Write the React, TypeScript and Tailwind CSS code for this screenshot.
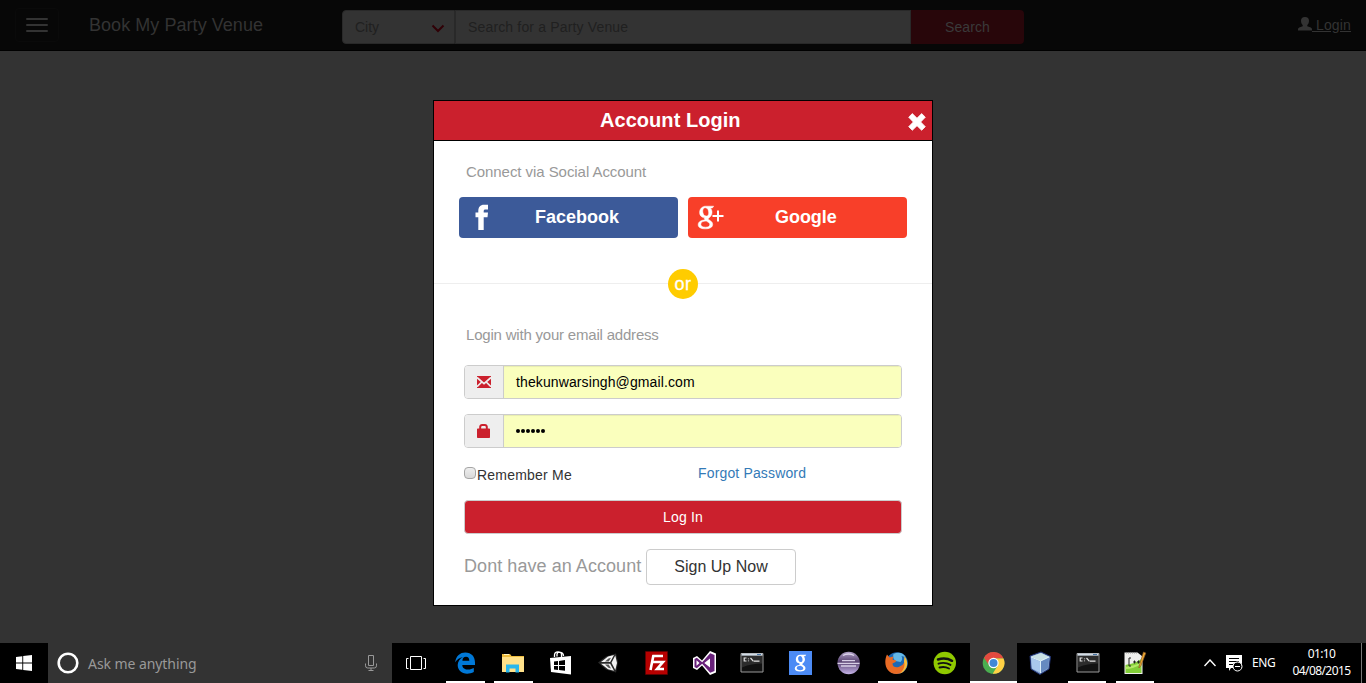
import React from "react";

function Svg({ children, w = 24, h = 24 }: { children: React.ReactNode; w?: number; h?: number }) {
  return (
    <svg width={w} height={h} viewBox={`0 0 ${w} ${h}`} fill="none" className="block shrink-0">
      {children}
    </svg>
  );
}

function Header() {
  return (
    <header className="flex h-[51px] shrink-0 items-start border-b border-black bg-[#070707]">
      <button className="ml-[15px] mt-2 flex h-[34px] w-11 flex-col items-center justify-center gap-1 rounded border border-[#0a0a0a]" aria-label="Menu">
        <span className="h-0.5 w-[22px] rounded-[1px] bg-[#333]" />
        <span className="h-0.5 w-[22px] rounded-[1px] bg-[#333]" />
        <span className="h-0.5 w-[22px] rounded-[1px] bg-[#333]" />
      </button>
      <div className="ml-[30px] mt-[15px] w-[253px] text-[18px] leading-5 tracking-[0.05px] text-[#333]">Book My Party Venue</div>
      <div className="mt-[10px] flex h-[34px] text-sm">
        <div className="flex w-[113px] items-center justify-between rounded-l border border-[#292929] bg-[#333] pl-3 pr-[9px] text-[#202020]">
          <span>City</span>
          <svg width="14" height="10" viewBox="0 0 14 10" fill="none" className="mt-[3px]">
            <path d="M1.500 1.500 7 7l5.500-5.500" stroke="#300006" strokeWidth="2" />
          </svg>
        </div>
        <div className="flex w-[456px] items-center border border-[#292929] bg-[#333] pl-3 tracking-[0.16px] text-[#202020]">Search for a Party Venue</div>
        <button className="w-[113px] rounded-r bg-[#28060a] tracking-[0.1px] text-[#3a3a3a]">Search</button>
      </div>
      <a className="ml-auto mr-[15px] mt-[15px] flex text-sm leading-5 text-[#333]">
        <svg width="14" height="15" viewBox="0 0 14 15" fill="#333" className="mt-px">
          <path d="M7 1C4.200 1 3 2.500 3 4.800c0 1.700.6 3.300 1.700 4.300v1.200L1.200 11.600C.4 12 0 12.500 0 13.200V14.500h14v-1.300c0-.7-.4-1.200-1.200-1.600l-3.500-1.300V9.100c1.100-1 1.700-2.600 1.700-4.300C11 2.500 9.800 1 7 1Z" />
        </svg>
        <span className="whitespace-pre tracking-[0.15px] underline"> Login</span>
      </a>
    </header>
  );
}

function Modal() {
  return (
    <section className="mx-auto mt-[49px] flex h-[506px] w-[500px] flex-col border border-black bg-white">
      <div className="flex h-10 shrink-0 border-b border-black bg-[#cb202d] text-white">
        <h1 className="ml-[166px] w-[141px] whitespace-nowrap text-xl font-bold leading-[38px] tracking-[0.05px]">Account Login</h1>
        <svg width="18" height="18" viewBox="0 0 18 18" fill="white" className="ml-auto mr-[6px] mt-3">
          <path d="M4.300.6 9 5.200 13.700.6 17.300 4.200 12.700 9l4.600 4.700-3.600 3.600L9 12.700l-4.700 4.600L.7 13.700 5.300 9 .7 4.200Z" stroke="white" strokeWidth=".8" strokeLinejoin="round" />
        </svg>
      </div>
      <p className="ml-8 mt-[21px] text-[15px] leading-5 tracking-[-0.06px] text-[#999]">Connect via Social Account</p>
      <div className="ml-[25px] mt-[15px] flex gap-[10px] text-[18px] font-bold text-white">
        <button className="flex h-[41px] w-[219px] items-center rounded bg-[#3c5a99]">
          <svg width="14" height="27" viewBox="0 0 14 27" fill="white" className="ml-4 shrink-0">
            <path d="M3.300 26V13.300H.5V8.500h2.800V7.200C3.300 3.100 5.200.8 9 .8h4v4.800h-2.300c-1.700 0-2 .6-2 1.700v1.200H13l-.5 4.800H8.700V26Z" />
          </svg>
          <span className="ml-[46px]">Facebook</span>
        </button>
        <button className="flex h-[41px] w-[219px] items-center rounded bg-[#f83f29]">
          <svg width="27" height="25" viewBox="0 0 27 25" fill="white" className="ml-[9px] shrink-0">
            <path transform="translate(.4 .4) scale(.95)" stroke="white" strokeWidth=".5" fillRule="evenodd" d="M8.800.8h8.400l-1.500 2h-2c1.100 1.200 1.700 2.800 1.700 4.500 0 3.100-1.700 4.700-3.300 5.900-1 .8-.8 1.300.2 2 2 1.400 3.800 2.300 3.800 4.800 0 3-3.300 4.700-7.700 4.700C3.500 24.700.8 23 .8 20.300c0-3.100 3.200-4.900 7.200-5-.8-.9-1-1.500-.6-2.500-3.100 0-5.100-2.200-5.100-5.300C2.300 3.600 5 .8 8.800.8Zm-.5 1.700C6.700 2.500 5.600 4 5.600 6c0 2.700 1.400 5.200 3.600 5.200 1.800 0 2.700-1.300 2.700-3.300 0-2.900-1.300-5.400-3.600-5.400Zm1 14c-3.300 0-5.700 1.200-5.700 3.300 0 1.900 2 3.100 5 3.100 2.800 0 4.400-1 4.400-2.700 0-1.400-1-2.200-3.700-3.700Z" />
            <path d="M20 5.500h2V10h4.500v2H22v4.500h-2V12h-4.500v-2H20Z" />
          </svg>
          <span className="ml-[51px] tracking-[-0.05px]">Google</span>
        </button>
      </div>
      <div className="mt-[30px] flex h-[31px] items-center">
        <span className="h-px flex-1 bg-[#eee]" />
        <span className="flex size-[30px] items-center justify-center rounded-full bg-[#fc0] pt-px text-[18px] tracking-[0.5px] text-white [-webkit-text-stroke:0.3px_white]">or</span>
        <span className="h-px flex-1 bg-[#eee]" />
      </div>
      <p className="ml-8 mt-[26px] text-[15px] leading-5 tracking-[-0.2px] text-[#999]">Login with your email address</p>
      <div className="ml-[30px] mt-5 flex w-[438px] flex-col text-sm">
        <div className="flex h-[34px] overflow-hidden rounded border border-[#ccc]">
          <div className="flex w-[39px] items-center justify-center border-r border-[#ccc] bg-[#eee]">
            <svg width="14" height="12" viewBox="0 0 14 12">
              <path d="M0 0h14v12H0Z" fill="#cb202d" />
              <path d="M0 1.500 7 7.600 14 1.500M0 10.700 4.800 6M14 10.700 9.200 6" fill="none" stroke="#eee" strokeWidth="1.700" />
            </svg>
          </div>
          <div className="flex flex-1 items-center bg-[#faffbd] pl-3 tracking-[0.11px] text-black shadow-[inset_0_1px_1px_rgba(0,0,0,0.075)]">thekunwarsingh@gmail.com</div>
        </div>
        <div className="mt-[15px] flex h-[34px] overflow-hidden rounded border border-[#ccc]">
          <div className="flex w-[39px] items-center justify-center border-r border-[#ccc] bg-[#eee]">
            <svg width="14" height="14" viewBox="0 0 14 14">
              <path d="M0 5.500c0-.6.400-1 1-1h1.200V2.800C2.200 1.100 3.500 0 5.100 0h2.800c1.600 0 2.900 1.100 2.900 2.800v1.700H12c.6 0 1 .4 1 1V13c0 .6-.4 1-1 1H1c-.6 0-1-.4-1-1Z" fill="#cb202d" />
              <path d="M4.200 4.500V3.200C4.200 2.400 4.700 2 5.400 2h2.200c.7 0 1.200.4 1.200 1.200v1.300Z" fill="#eee" />
            </svg>
          </div>
          <div className="flex flex-1 items-center gap-[1px] bg-[#faffbd] pl-3 shadow-[inset_0_1px_1px_rgba(0,0,0,0.075)]">
            {[0, 1, 2, 3, 4, 5].map((i) => <span key={i} className="size-1 rounded-full bg-black" />)}
          </div>
        </div>
        <div className="mt-[15px] flex h-5 items-start">
          <span className="mt-1 size-3 rounded-sm border border-[#a5a5a5] bg-linear-to-b from-[#eee] to-[#d9d9d9]" />
          <span className="ml-px mt-[2px] w-[221px] leading-5 tracking-[0.22px] text-[#333]">Remember Me</span>
          <a className="leading-5 tracking-[0.15px] text-[#337ab7]">Forgot Password</a>
        </div>
        <button className="mt-[17px] h-[34px] rounded border border-[#ccc] bg-[#cb202d] tracking-[0.15px] text-white">Log In</button>
        <div className="mt-[15px] flex">
          <span className="w-[182px] whitespace-nowrap text-[18px] leading-[34px] tracking-[0.06px] text-[#999]">Dont have an Account</span>
          <button className="h-9 w-[150px] rounded border border-[#ccc] text-base text-[#333]">Sign Up Now</button>
        </div>
      </div>
    </section>
  );
}

function ConsoleIcon() {
  return (
    <Svg>
      <path d="M1 2.500h22V21H1Z" fill="#111" stroke="#9a9a9a" />
      <path d="M1.500 2.500h21v2.200h-21Z" fill="#d2dce6" />
      <path d="M17 3.500h4" stroke="#4774a4" />
      <path d="M2 5h20v7.500c-7 0-13 1-20 4Z" fill="#2c2c2c" />
      <path d="M6.500 7H4.200v3h2.300M8.500 7.500v.8M8.500 9.500v.8M10.500 7l3 3.300M14 10.200h5.500" stroke="#e4e4e4" strokeWidth="1.200" />
    </Svg>
  );
}

const icons: { icon: React.ReactNode; on?: boolean; active?: boolean; late?: boolean }[] = [
  { icon: <Svg><path d="M6.500 5.500h11v13h-11ZM4.500 7.500h-2v10h2M19.500 7.500h2v10h-2" stroke="white" /></Svg> },
  { on: true, icon: <Svg><path d="M3.200 11.200C4 4.800 8.200 1.500 13.300 1.500c6.200 0 9.700 4.300 9.700 10.100v2.300H10.300c.1 3.400 3 4.700 5.900 4.700 2.100 0 4-.6 5.600-1.500V21c-2 1.200-4.400 1.700-6.700 1.700-5.500 0-9.400-3.200-9.400-8.600 0-3.500 2-6.400 5.200-7.900-3.400.5-5.700 2.100-7.700 5Zm7.200-1.500h6.900c0-2.500-1-4-3.300-4s-3.400 1.600-3.600 4Z" fill="#0078d7" /></Svg> },
  { on: true, icon: <Svg><path d="M2 3h8l1.500 2H24v16H2Z" fill="#efbd3e" /><path d="M2 6h22v15H2Z" fill="#ffe18a" /><path d="M4 3.500h5" stroke="#fff3bf" /><path d="M6 21.500v-8h13v8h-3.500v-4h-6v4Z" fill="#28b7ed" /></Svg> },
  { icon: <Svg><path d="m2 7 21-2v18.500L3 21Z" fill="white" /><path d="M6.500 6V4c0-4 7-4 7-.5V6M9 5.500V3c1-3 6.500-2 6.500 2" stroke="white" strokeWidth="1.300" /><path d="m6 10.500 4-.5v4H6Zm5-.6 6-.8V14h-6ZM6 15h4v4l-4-.4Zm5 0h6v4.700l-6-.6Z" fill="#000" /></Svg> },
  { icon: <Svg><path d="m2 11.500 8-6 10-3 2 9-2 10-10-3Z" fill="#292929" /><path d="m5 11 7-5.500 6-1.500-3.800 7ZM15.500 11.700 19.300 4.500 21 12l-1.700 7ZM5 12.700h9.200l3.800 7-6-1.500Z" fill="#f3f3f3" /><path d="m9 10.500 3.500-3 2.500-.8-2.300 3.800ZM9 13.500h3.700l2.300 4-2.500-.7Z" fill="#555" /></Svg> },
  { icon: <Svg><path d="M1.500.500h22v23h-22Z" fill="#b60000" stroke="#650000" strokeDasharray="1 1" /><path d="M9 5h10M9.500 4l-3 15M7.500 11h6.500M13 11h6l-6 7h7" stroke="white" strokeWidth="2.600" /></Svg> },
  { icon: <Svg><path d="m1 7 4-2 5 4.500L18 0l6 2.500v19L18 24l-8-9.500L5 19l-4-2Z" fill="white" /><path d="m2.500 8 2.300-1.200 5.400 4.500 8-9 4.300 1.700v16l-4.300 1.700-8-9-5.400 4.500L2.500 16Z" fill="#68217a" /><path d="m4.500 9.300 3 2.700-3 2.700ZM18 7.500v9L12.300 12Z" fill="white" /></Svg> },
  { icon: <ConsoleIcon /> },
  { icon: <Svg><path d="M1 0h23v24H1Z" fill="#4c8bf5" /><path transform="translate(6.200 3.200) scale(.7)" fillRule="evenodd" fill="white" d="M8.800.8h8.400l-1.500 2h-2c1.100 1.200 1.700 2.800 1.700 4.500 0 3.100-1.700 4.700-3.300 5.900-1 .8-.8 1.300.2 2 2 1.400 3.800 2.300 3.800 4.800 0 3-3.300 4.700-7.700 4.700C3.500 24.700.8 23 .8 20.300c0-3.100 3.200-4.900 7.200-5-.8-.9-1-1.500-.6-2.500-3.100 0-5.100-2.200-5.100-5.300C2.300 3.600 5 .8 8.800.8Zm-.5 1.700C6.700 2.500 5.600 4 5.600 6c0 2.700 1.400 5.200 3.600 5.200 1.800 0 2.700-1.300 2.700-3.300 0-2.900-1.300-5.400-3.600-5.400Zm1 14c-3.300 0-5.700 1.200-5.700 3.300 0 1.900 2 3.100 5 3.100 2.800 0 4.400-1 4.400-2.700 0-1.400-1-2.200-3.700-3.700Z" /></Svg> },
  { icon: <Svg><defs><linearGradient id="orb" x2="0" y2="1"><stop stopColor="#b0a1c6" /><stop offset=".45" stopColor="#57416f" /><stop offset="1" stopColor="#c5b3e8" /></linearGradient></defs><circle cx="12.700" cy="12" r="11.200" fill="url(#orb)" /><path d="M6 9.700h13M1.500 12.300h22M5 15h15" stroke="#d8cfe6" strokeWidth="1.300" /><path d="M7 4.500c3-2 8-2 11 0" stroke="#ded6ec" strokeWidth="1.500" /></Svg> },
  { on: true, icon: <Svg><circle cx="13" cy="12" r="10.800" fill="#1c69b6" /><path d="M9.500 3c5-2.500 10-1 12 3l-4-1c1 2 1 4-1 6l-5-1c-2-2-3-4-2-7Z" fill="#63b8e8" /><path d="M3 3.500 5.500 6.500l4-1-1 3 3.500 1c1 1-1 2-3.500 3 0 4 5 5 8 2.500 3-1 4-4 4.500-7 3 8-1 15-8.500 15C2 23-1 12 3 3.500Z" fill="#e96b25" /><path d="M20.500 5c6 8 1 16-5 17.500 4-3 6-7 4.500-12Z" fill="#f9bd37" /></Svg> },
  { icon: <Svg><circle cx="12.800" cy="12" r="11.200" fill="#90c900" /><path d="M6 8.500c4.800-1.500 10-1 14 1.300" stroke="#111" strokeWidth="2.500" strokeLinecap="round" /><path d="M6.500 12.700c4-1.300 8.500-.8 12 1.200M7.500 16.500c3.300-.9 6.700-.5 9.500 1" stroke="#111" strokeWidth="1.900" strokeLinecap="round" /></Svg> },
  { active: true, icon: <Svg><circle cx="11.500" cy="12" r="10.800" fill="#4aae50" /><path d="M2 6.700a10.800 10.800 0 0 1 19.500.8H11.500a5 5 0 0 0-4.700 6.500Z" fill="#e34a3f" /><path d="M21.500 7.500A10.800 10.800 0 0 1 10.700 22.800l5-8.300a5 5 0 0 0-3.500-7Z" fill="#ffd045" /><circle cx="11.500" cy="12" r="5.200" fill="white" /><circle cx="11.500" cy="12" r="4" fill="#4187d6" /></Svg> },
  { late: true, icon: <Svg><path d="m2 5 11-4 9.500 4.500L21 18l-9 5.500L3 18Z" fill="#809dc8" stroke="#1d2f70" /><path d="m3 5.500 10-3.500 8.500 4-9 4Z" fill="#c8e0e4" /><path d="m3 6.500 9 4v11L4 17.500Z" fill="#a9c8ed" /><path d="m13 10.500 8-4L20 17l-7 4.500Z" fill="#668ac0" /><path d="m3 6 9.500 4v12M12.500 10 21 6" stroke="#dcf0fa" /></Svg> },
  { on: true, late: true, icon: <ConsoleIcon /> },
  { on: true, late: true, icon: <Svg><path d="M.5 1.500h13l5 4V23H.5Z" fill="#efefed" /><path d="M1.500 14c5-1 10-2 16-6v14h-16Z" fill="#82ce38" /><path d="M1.500 18c5 0 11-2 16-5v-2c-5 3-10 4-16 5Z" fill="#b4e968" /><path d="M2 2h12" stroke="#999" strokeDasharray="1 1" /><path d="M7 7H5v8h2M9 11h3M13 11h3M10.500 9.500v3M14.500 9.500v3" stroke="#222" /><path d="m19.500 1-4 13-.7 3 2-2 5-13Z" fill="#efaa31" stroke="#8c5a26" strokeWidth=".7" /></Svg> },
];

function Taskbar() {
  return (
    <footer className="flex h-10 shrink-0 bg-black font-['Noto_Sans',sans-serif] text-white">
      <div className="flex w-12 items-center justify-center">
        <svg width="16" height="16" viewBox="0 0 16 16" fill="white"><path d="m0 2 6.300-.8v6.300H0ZM7.200 1 16 0v7.500H7.200ZM0 8.400h6.300v6.400L0 14Zm7.200 0H16V16l-8.800-1Z" /></svg>
      </div>
      <div className="flex w-[344px] items-center bg-[#333]">
        <svg width="22" height="22" viewBox="0 0 22 22" className="ml-[9px]"><circle cx="11" cy="11" r="9.300" fill="none" stroke="white" strokeWidth="2.600" /></svg>
        <span className="ml-[9px] w-[278px] pt-px text-sm tracking-[-0.07px] text-[#999]">Ask me anything</span>
        <svg width="12" height="18" viewBox="0 0 12 18" fill="none" stroke="#999" className="-ml-px"><path d="M3.500 1.500h5v10h-5ZM.5 9.500v2.300q0 2.200 2.200 2.200h6.600q2.200 0 2.200-2.200V9.500M6 14v2.500M3.500 16.500h5" /></svg>
      </div>
      {icons.map((item, i) => (
        <div key={i} className={item.active ? "-mr-px ml-0.5 flex h-10 w-[47px] flex-col items-center bg-[#333] pt-2" : item.late ? "flex h-10 w-12 flex-col items-center pt-2 pr-px" : "flex h-10 w-12 flex-col items-center pt-2"}>
          {item.icon}
          {item.active && <span className="mt-[6px] h-0.5 w-[47px] bg-white" />}
          {item.on && <span className={item.late ? "mr-px mt-[6px] h-0.5 w-[38px] bg-white" : "ml-[3px] mt-[6px] h-0.5 w-[39px] bg-white"} />}
        </div>
      ))}
      <div className="ml-auto flex items-center">
        <svg width="12" height="8" viewBox="0 0 12 8" fill="none" stroke="white" strokeWidth="1.400"><path d="m.5 7 5.500-6 5.500 6" /></svg>
        <svg width="17" height="17" viewBox="0 0 17 17" className="ml-[10px]"><path d="M0 0h16v13H5l-2 3v-3H0Z" fill="white" /><path d="M3 3.500h10M3 6.500h10M3 9.500h4" stroke="#000" /><circle cx="11.500" cy="11.500" r="4.500" fill="#000" stroke="white" /><path d="M9 11.500h5" stroke="white" /></svg>
        <span className="ml-[9px] w-[36px] text-xs tracking-[-0.4px]">ENG</span>
        <div className="-mt-0.5 w-[67px] whitespace-nowrap text-center text-xs leading-[17px] tracking-[-0.6px]"><div>01:10</div><div>04/08/2015</div></div>
        <span className="ml-[6px] h-10 w-px bg-[#777]" /><span className="w-1" />
      </div>
    </footer>
  );
}

export default function App() {
  return (
    <div className="flex h-[683px] w-[1366px] flex-col overflow-hidden bg-[#333] font-['Liberation_Sans',Arial,sans-serif]">
      <Header />
      <main className="h-[592px]"><Modal /></main>
      <Taskbar />
    </div>
  );
}
